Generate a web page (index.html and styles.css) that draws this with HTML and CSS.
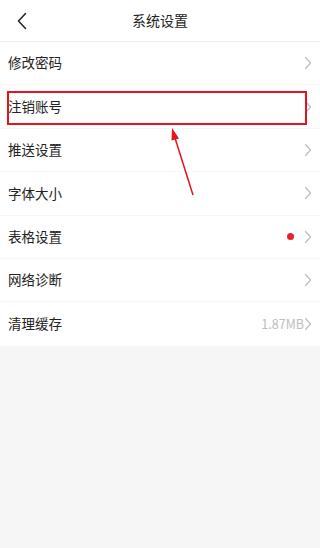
FILE: index.html
```html
<!DOCTYPE html>
<html lang="zh">
<head>
<meta charset="utf-8">
<link rel="stylesheet" href="styles.css">
</head>
<body>
<div class="page">
  <header class="bar">
    <svg class="back" width="12" height="18" viewBox="0 0 12 18"><path d="M9.5 1.5 L2.5 9 L9.5 16.5" fill="none" stroke="#222" stroke-width="1.5" stroke-linecap="round" stroke-linejoin="round"/></svg>
    <div class="title">系统设置</div>
  </header>
  <ul class="list">
    <li class="row"><span class="label">修改密码</span><span class="right"><svg class="chev" width="8" height="14" viewBox="0 0 8 14"><path d="M1.5 1.5 L6.5 7 L1.5 12.5" fill="none" stroke="#bdbdbd" stroke-width="1.2" stroke-linecap="round" stroke-linejoin="round"/></svg></span></li>
    <li class="row"><span class="label">注销账号</span><span class="right"><svg class="chev" width="8" height="14" viewBox="0 0 8 14"><path d="M1.5 1.5 L6.5 7 L1.5 12.5" fill="none" stroke="#bdbdbd" stroke-width="1.2" stroke-linecap="round" stroke-linejoin="round"/></svg></span></li>
    <li class="row"><span class="label">推送设置</span><span class="right"><svg class="chev" width="8" height="14" viewBox="0 0 8 14"><path d="M1.5 1.5 L6.5 7 L1.5 12.5" fill="none" stroke="#bdbdbd" stroke-width="1.2" stroke-linecap="round" stroke-linejoin="round"/></svg></span></li>
    <li class="row"><span class="label">字体大小</span><span class="right"><svg class="chev" width="8" height="14" viewBox="0 0 8 14"><path d="M1.5 1.5 L6.5 7 L1.5 12.5" fill="none" stroke="#bdbdbd" stroke-width="1.2" stroke-linecap="round" stroke-linejoin="round"/></svg></span></li>
    <li class="row"><span class="label">表格设置</span><span class="right"><span class="dot"></span><svg class="chev" width="8" height="14" viewBox="0 0 8 14"><path d="M1.5 1.5 L6.5 7 L1.5 12.5" fill="none" stroke="#bdbdbd" stroke-width="1.2" stroke-linecap="round" stroke-linejoin="round"/></svg></span></li>
    <li class="row"><span class="label">网络诊断</span><span class="right"><svg class="chev" width="8" height="14" viewBox="0 0 8 14"><path d="M1.5 1.5 L6.5 7 L1.5 12.5" fill="none" stroke="#bdbdbd" stroke-width="1.2" stroke-linecap="round" stroke-linejoin="round"/></svg></span></li>
    <li class="row last"><span class="label">清理缓存</span><span class="right"><span class="size">1.87MB</span><svg class="chev" width="8" height="14" viewBox="0 0 8 14"><path d="M1.5 1.5 L6.5 7 L1.5 12.5" fill="none" stroke="#bdbdbd" stroke-width="1.2" stroke-linecap="round" stroke-linejoin="round"/></svg></span></li>
  </ul>
  <div class="highlight"></div>
  <svg class="pointer" width="40" height="80" viewBox="0 0 40 80"><path d="M32 75 L14 18" stroke="#e3141b" stroke-width="1.5" fill="none"/><path d="M11 8 L18 18.5 L10.5 20.5 Z" fill="#e3141b"/></svg>
</div>
</body>
</html>
```

FILE: styles.css
```css
* { box-sizing: border-box; }
html, body { margin: 0; padding: 0; }
body {
  background: #f6f6f6;
  font-family: "Noto Sans CJK SC", "Noto Sans", sans-serif;
  color: #222;
}
.page { position: relative; width: 320px; height: 548px; }
.bar {
  height: 42px;
  background: #fff;
  border-bottom: 1px solid #ededed;
  display: flex;
  align-items: center;
  justify-content: center;
  position: relative;
}
.back { position: absolute; left: 16px; top: 12px; }
.title { font-size: 14px; color: #222; line-height: 1; margin-top: -2px; }
.list { list-style: none; margin: 0; padding: 0; background: #fff; }
.row {
  height: 43.4px;
  display: flex;
  align-items: center;
  justify-content: space-between;
  padding: 0 8px 0 8px;
  border-bottom: 1px solid #f7f7f7;
}
.row.last { border-bottom: none; }
.label { font-size: 13.5px; line-height: 1; color: #222; }
.right { display: flex; align-items: center; }
.chev { display: block; }
.dot {
  width: 7px; height: 7px; border-radius: 50%;
  background: #e8232a; margin-right: 10px;
}
.size { font-size: 12.5px; color: #bdbdbd; line-height: 1; }
.highlight {
  position: absolute;
  left: 7px; top: 91px;
  width: 300px; height: 34px;
  border: 2px solid #e3141b;
}
.pointer { position: absolute; left: 161px; top: 120px; }
```
